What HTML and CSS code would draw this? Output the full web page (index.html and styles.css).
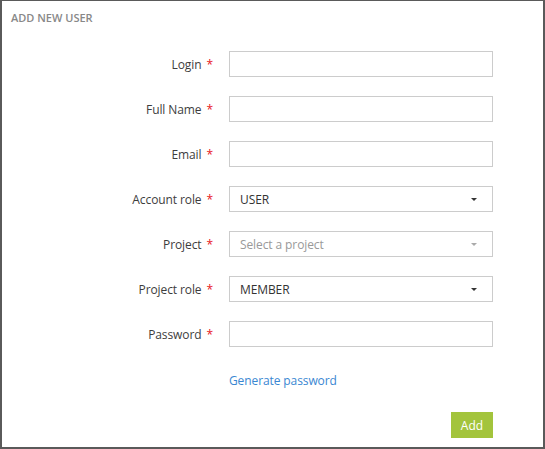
FILE: index.html
```html
<!DOCTYPE html>
<html>
<head>
<meta charset="utf-8">
<link rel="stylesheet" href="styles.css">
</head>
<body>
<div class="panel">
  <div class="title">ADD NEW USER</div>
  <form class="form">
    <label class="label">Login <span class="req">*</span></label>
    <div class="input"></div>
    <label class="label">Full Name <span class="req">*</span></label>
    <div class="input"></div>
    <label class="label">Email <span class="req">*</span></label>
    <div class="input"></div>
    <label class="label">Account role <span class="req">*</span></label>
    <div class="input select"><span>USER</span><span class="caret"></span></div>
    <label class="label">Project <span class="req">*</span></label>
    <div class="input select placeholder"><span>Select a project</span><span class="caret light"></span></div>
    <label class="label">Project role <span class="req">*</span></label>
    <div class="input select"><span>MEMBER</span><span class="caret"></span></div>
    <label class="label">Password <span class="req">*</span></label>
    <div class="input"></div>
    <div></div>
    <a class="link">Generate password</a>
    <div></div>
    <div class="actions"><button type="button" class="btn">Add</button></div>
  </form>
</div>
</body>
</html>
```
FILE: styles.css
```css
html, body {
  margin: 0;
  padding: 0;
}
body {
  font-family: "Open Sans", "Liberation Sans", sans-serif;
  font-size: 12px;
  letter-spacing: -0.1px;
  color: #3d3d3d;
  background: #fff;
}
.panel {
  box-sizing: border-box;
  width: 545px;
  height: 449px;
  border: 2px solid #5a5a5a;
  border-top-width: 1px;
}
.title {
  padding: 10px 0 0 9px;
  font-size: 11px;
  font-weight: 600;
  letter-spacing: 0;
  color: #888;
  line-height: 14px;
}
.form {
  display: grid;
  grid-template-columns: 211px 264px;
  column-gap: 16px;
  row-gap: 19px;
  margin-top: 26px;
  align-items: center;
}
.label {
  text-align: right;
  white-space: nowrap;
}
.req {
  color: #e8141b;
  margin-left: 2px;
}
.input {
  box-sizing: border-box;
  height: 26px;
  border: 1px solid #ccc;
  background: #fff;
}
.select {
  display: flex;
  align-items: center;
  justify-content: space-between;
  padding: 0 15px 0 10px;
  color: #333;
}
.placeholder {
  color: #999;
}
.caret {
  width: 0;
  height: 0;
  border-left: 3px solid transparent;
  border-right: 3px solid transparent;
  border-top: 3px solid #333;
  margin-top: 1px;
}
.caret.light {
  border-top-color: #aaa;
}
.link {
  color: #3a87d2;
  margin-top: 6px;
  cursor: pointer;
}
.actions {
  display: flex;
  justify-content: flex-end;
  margin-top: 4px;
}
.btn {
  width: 42px;
  height: 26px;
  border: 0;
  background: #a3c43c;
  color: #fff;
  font-family: "Open Sans", "Liberation Sans", sans-serif;
  font-size: 12px;
  padding: 0;
}
```
